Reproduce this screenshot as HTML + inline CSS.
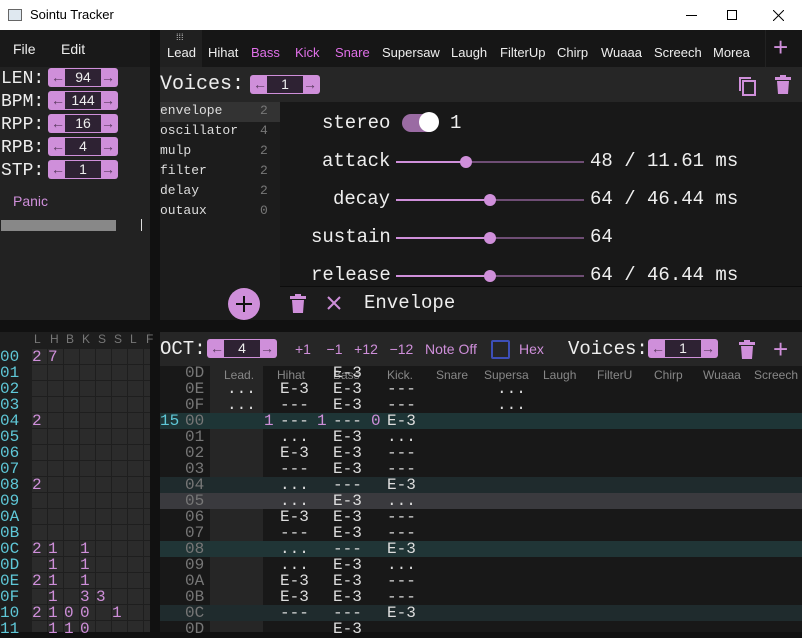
<!DOCTYPE html>
<html><head><meta charset="utf-8"><style>
*{margin:0;padding:0;box-sizing:border-box}
body{width:802px;height:632px;overflow:hidden;background:#111;font-family:"Liberation Sans",sans-serif;position:relative}
.a{position:absolute;white-space:pre}
.m{font-family:"Liberation Mono",monospace}
.pk{color:#cf8fda}
.w{color:#eee}
.g{color:#777}
.num{background:#cf8fda;border-radius:3px;height:19px}
.num i{position:absolute;left:17px;right:17px;bottom:1px;top:1px;background:#2e2233;color:#eee;font-style:normal;text-align:center;font-family:"Liberation Sans";font-size:14px;line-height:17px}
.num b{position:absolute;top:0;font-weight:normal;color:#5a3a60;font-size:14px;line-height:18px}
.pr{font-family:"Liberation Mono",monospace;font-size:16px;color:#ddd;line-height:16px}
.t{position:absolute;top:45px;font-size:13px;color:#eee}
.h{position:absolute;top:368px;font-size:12px;color:#888}
</style></head><body>
<!-- title bar -->
<div class="a" style="left:0;top:0;width:802px;height:30px;background:#fff"></div>
<div class="a" style="left:8px;top:9px;width:14px;height:12px;border:1px solid #666;background:#dfe8f0"></div>
<div class="a" style="left:30px;top:7px;font-size:13px;color:#000">Sointu Tracker</div>
<div class="a" style="left:686px;top:15px;width:11px;height:1px;background:#000"></div>
<div class="a" style="left:727px;top:10px;width:10px;height:10px;border:1px solid #000"></div>
<svg class="a" style="left:773px;top:10px" width="11" height="11"><path d="M0 0L11 11M11 0L0 11" stroke="#000" stroke-width="1"/></svg>

<!-- left panel -->
<div class="a" style="left:0;top:30px;width:150px;height:37px;background:#191919"></div>
<div class="a" style="left:0;top:67px;width:150px;height:253px;background:#222"></div>
<div class="a w" style="left:13px;top:41px;font-size:14px">File</div>
<div class="a w" style="left:61px;top:41px;font-size:14px">Edit</div>
<div class="a m w" style="left:1px;top:68px;font-size:18px;line-height:23px">LEN:<br>BPM:<br>RPP:<br>RPB:<br>STP:</div>
<div class="a num" style="left:48px;top:68px;width:70px"><b style="left:3px">←</b><i>94</i><b style="right:3px">→</b></div>
<div class="a num" style="left:48px;top:91px;width:70px"><b style="left:3px">←</b><i>144</i><b style="right:3px">→</b></div>
<div class="a num" style="left:48px;top:114px;width:70px"><b style="left:3px">←</b><i>16</i><b style="right:3px">→</b></div>
<div class="a num" style="left:48px;top:137px;width:70px"><b style="left:3px">←</b><i>4</i><b style="right:3px">→</b></div>
<div class="a num" style="left:48px;top:160px;width:70px"><b style="left:3px">←</b><i>1</i><b style="right:3px">→</b></div>
<div class="a pk" style="left:13px;top:193px;font-size:14px">Panic</div>
<div class="a" style="left:1px;top:220px;width:115px;height:11px;background:#888"></div>
<div class="a" style="left:141px;top:219px;width:1px;height:12px;background:#ddd"></div>

<!-- tabs -->
<div class="a" style="left:160px;top:30px;width:642px;height:37px;background:#161616"></div>
<div class="a" style="left:160px;top:30px;width:42px;height:37px;background:#202020"></div>
<div class="a" style="left:176px;top:32px;font-size:9px;color:#ccc">⁞⁞⁞</div>
<div class="t" style="left:167px">Lead</div>
<div class="t pk" style="left:208px">Hihat</div>
<div class="t" style="left:251px;color:#e070e8">Bass</div>
<div class="t" style="left:295px;color:#e070e8">Kick</div>
<div class="t" style="left:335px;color:#e070e8">Snare</div>
<div class="t" style="left:382px">Supersaw</div>
<div class="t" style="left:451px">Laugh</div>
<div class="t" style="left:500px">FilterUp</div>
<div class="t" style="left:557px">Chirp</div>
<div class="t" style="left:601px">Wuaaa</div>
<div class="t" style="left:654px">Screech</div>
<div class="t" style="left:713px">Morea</div>
<div class="a" style="left:765px;top:30px;width:37px;height:37px;background:#161616;border-left:1px solid #222"></div>
<div class="a pk" style="left:773px;top:33px;font-size:26px;line-height:28px">+</div>

<!-- voices row -->
<div class="a" style="left:160px;top:67px;width:642px;height:35px;background:#262626"></div>
<div class="a w" style="left:160px;top:73px;font-size:20px;font-family:'Liberation Mono',monospace">Voices:</div>
<div class="a num" style="left:250px;top:75px;width:70px"><b style="left:3px">←</b><i>1</i><b style="right:3px">→</b></div>
<svg class="a" style="left:736px;top:74px" width="22" height="22"><path d="M3 3v14h2V5h10V3z" fill="#cf8fda"/><rect x="7" y="7" width="12" height="14" fill="none" stroke="#cf8fda" stroke-width="2"/></svg>
<svg class="a" style="left:774px;top:75px" width="18" height="20"><rect x="1" y="2" width="16" height="3" fill="#cf8fda"/><rect x="6" y="0" width="6" height="3" fill="#cf8fda"/><path d="M3 6h12l-1 13H4z" fill="#cf8fda"/></svg>

<!-- unit list -->
<div class="a" style="left:160px;top:102px;width:120px;height:218px;background:#1c1c1c"></div>
<div class="a" style="left:160px;top:102px;width:120px;height:20px;background:#333"></div>
<div class="a m" style="left:160px;top:101px;font-size:13px;line-height:20px;color:#ddd">envelope<br>oscillator<br>mulp<br>filter<br>delay<br>outaux</div>
<div class="a m g" style="left:260px;top:101px;font-size:13px;line-height:20px">2<br>4<br>2<br>2<br>2<br>0</div>

<!-- params -->
<div class="a" style="left:280px;top:102px;width:522px;height:186px;background:#181818"></div>
<div class="a m w" style="left:322px;top:112px;font-size:19px">stereo</div>
<div class="a" style="left:402px;top:114px;width:36px;height:18px;border-radius:9px;background:#9a6ba3"></div>
<div class="a" style="left:419px;top:112px;width:20px;height:20px;border-radius:10px;background:#fff"></div>
<div class="a m w" style="left:450px;top:112px;font-size:19px">1</div>
<div class="a m w" style="left:322px;top:150px;font-size:19px">attack</div>
<div class="a m w" style="left:333px;top:188px;font-size:19px">decay</div>
<div class="a m w" style="left:311px;top:226px;font-size:19px">sustain</div>
<div class="a m w" style="left:311px;top:264px;font-size:19px">release</div>
<div class="a" style="left:396px;top:161px;width:70px;height:2px;background:#cf8fda"></div><div class="a" style="left:466px;top:161px;width:118px;height:2px;background:#6e4d74"></div><div class="a" style="left:460px;top:156px;width:12px;height:12px;border-radius:6px;background:#cf8fda"></div>
<div class="a" style="left:396px;top:199px;width:94px;height:2px;background:#cf8fda"></div><div class="a" style="left:490px;top:199px;width:94px;height:2px;background:#6e4d74"></div><div class="a" style="left:484px;top:194px;width:12px;height:12px;border-radius:6px;background:#cf8fda"></div>
<div class="a" style="left:396px;top:237px;width:94px;height:2px;background:#cf8fda"></div><div class="a" style="left:490px;top:237px;width:94px;height:2px;background:#6e4d74"></div><div class="a" style="left:484px;top:232px;width:12px;height:12px;border-radius:6px;background:#cf8fda"></div>
<div class="a" style="left:396px;top:275px;width:94px;height:2px;background:#cf8fda"></div><div class="a" style="left:490px;top:275px;width:94px;height:2px;background:#6e4d74"></div><div class="a" style="left:484px;top:270px;width:12px;height:12px;border-radius:6px;background:#cf8fda"></div>
<div class="a m w" style="left:590px;top:150px;font-size:19px">48 / 11.61 ms</div>
<div class="a m w" style="left:590px;top:188px;font-size:19px">64 / 46.44 ms</div>
<div class="a m w" style="left:590px;top:226px;font-size:19px">64</div>
<div class="a m w" style="left:590px;top:264px;font-size:19px">64 / 46.44 ms</div>
<div class="a" style="left:280px;top:286px;width:522px;height:34px;background:#1c1c1c;border-top:1px solid #0c0c0c"></div>
<div class="a" style="left:228px;top:288px;width:32px;height:32px;border-radius:16px;background:#cf8fda"></div>
<div class="a" style="left:236px;top:303px;width:16px;height:2px;background:#111"></div><div class="a" style="left:243px;top:296px;width:2px;height:16px;background:#111"></div>
<svg class="a" style="left:290px;top:294px" width="16" height="19"><rect x="0" y="2" width="16" height="3" fill="#cf8fda"/><rect x="5" y="0" width="6" height="3" fill="#cf8fda"/><path d="M2 6h12l-1 13H3z" fill="#cf8fda"/></svg>
<svg class="a" style="left:326px;top:295px" width="16" height="16"><path d="M2 2L14 14M14 2L2 14" stroke="#cf8fda" stroke-width="2"/></svg>
<div class="a m w" style="left:364px;top:292px;font-size:19px">Envelope</div>

<!-- order list -->
<div class="a" style="left:0;top:332px;width:150px;height:300px;background:#1e1e1e"></div>
<div class="a" style="left:34px;top:332px;font-size:12px;color:#777">L</div>
<div class="a" style="left:50px;top:332px;font-size:12px;color:#777">H</div>
<div class="a" style="left:66px;top:332px;font-size:12px;color:#777">B</div>
<div class="a" style="left:82px;top:332px;font-size:12px;color:#777">K</div>
<div class="a" style="left:98px;top:332px;font-size:12px;color:#777">S</div>
<div class="a" style="left:114px;top:332px;font-size:12px;color:#777">S</div>
<div class="a" style="left:130px;top:332px;font-size:12px;color:#777">L</div>
<div class="a" style="left:146px;top:332px;font-size:12px;color:#777">F</div>
<div class="a m" style="left:0;top:349px;font-size:16px;line-height:16px;color:#5fc8d8">00<br>01<br>02<br>03<br>04<br>05<br>06<br>07<br>08<br>09<br>0A<br>0B<br>0C<br>0D<br>0E<br>0F<br>10<br>11</div>
<svg class="a" style="left:32px;top:349px" width="118" height="283">
<defs><pattern id="p" width="16" height="16" patternUnits="userSpaceOnUse"><rect width="15" height="15" fill="#2b2b2b"/></pattern></defs>
<rect width="118" height="283" fill="url(#p)"/></svg>
<div class="a m pk" style="left:32px;top:349px;font-size:16px;line-height:16px;letter-spacing:6.4px">27<br><br><br><br>2<br><br><br><br>2<br><br><br><br>21 1<br> 1 1<br>21 1<br> 1 33<br>2100 1<br> 110</div>

<!-- pattern -->
<div class="a" style="left:160px;top:332px;width:642px;height:300px;background:#181818"></div>
<div class="a" style="left:160px;top:332px;width:642px;height:34px;background:#262626"></div>
<div class="a w m" style="left:160px;top:338px;font-size:19px">OCT:</div>
<div class="a num" style="left:207px;top:339px;width:70px"><b style="left:3px">←</b><i>4</i><b style="right:3px">→</b></div>
<div class="a pk" style="left:295px;top:341px;font-size:14px">+1    −1   +12   −12   Note Off</div>
<div class="a" style="left:491px;top:340px;width:19px;height:19px;border:2px solid #3d4fb8;border-radius:2px"></div>
<div class="a pk" style="left:519px;top:341px;font-size:14px">Hex</div>
<div class="a w" style="left:568px;top:338px;font-size:19px;font-family:'Liberation Mono',monospace">Voices:</div>
<div class="a num" style="left:648px;top:339px;width:70px"><b style="left:3px">←</b><i>1</i><b style="right:3px">→</b></div>
<svg class="a" style="left:739px;top:340px" width="16" height="19"><rect x="0" y="2" width="16" height="3" fill="#cf8fda"/><rect x="5" y="0" width="6" height="3" fill="#cf8fda"/><path d="M2 6h12l-1 13H3z" fill="#cf8fda"/></svg>
<div class="a pk" style="left:773px;top:334px;font-size:26px">+</div>

<div class="a" style="left:210px;top:366px;width:53px;height:266px;background:#262626"></div>
<div class="a" style="left:160px;top:413px;width:642px;height:16px;background:#1e3536"></div>
<div class="a" style="left:160px;top:477px;width:642px;height:16px;background:#1f2b2d"></div>
<div class="a" style="left:160px;top:493px;width:642px;height:16px;background:#3a3a3e"></div>
<div class="a" style="left:160px;top:541px;width:642px;height:16px;background:#203536"></div>
<div class="a" style="left:160px;top:605px;width:642px;height:16px;background:#1f2b2d"></div>
<div class="h" style="left:224px">Lead.</div>
<div class="h" style="left:277px">Hihat</div>
<div class="h" style="left:333px">Bass</div>
<div class="h" style="left:387px">Kick.</div>
<div class="h" style="left:436px">Snare</div>
<div class="h" style="left:484px">Supersa</div>
<div class="h" style="left:543px">Laugh</div>
<div class="h" style="left:597px">FilterU</div>
<div class="h" style="left:654px">Chirp</div>
<div class="h" style="left:703px">Wuaaa</div>
<div class="h" style="left:754px">Screech</div>
<div class="a pr" style="left:185px;top:365px;color:#777">0D<br>0E<br>0F<br>00<br>01<br>02<br>03<br>04<br>05<br>06<br>07<br>08<br>09<br>0A<br>0B<br>0C<br>0D</div>
<div class="a pr" style="left:160px;top:413px;color:#5fc8d8">15</div>
<div class="a pr" style="left:227px;top:365px"><br>...<br>...</div>
<div class="a pr" style="left:497px;top:365px"><br>...<br>...</div>
<div class="a pr" style="left:264px;top:413px;color:#cf8fda">1</div>
<div class="a pr" style="left:317px;top:413px;color:#cf8fda">1</div>
<div class="a pr" style="left:371px;top:413px;color:#cf8fda">0</div>
<div class="a pr" style="left:280px;top:365px"><br>E-3<br>---<br>---<br>...<br>E-3<br>---<br>...<br>...<br>E-3<br>---<br>...<br>...<br>E-3<br>E-3<br>---</div>
<div class="a pr" style="left:333px;top:365px">E-3<br>E-3<br>E-3<br>---<br>E-3<br>E-3<br>E-3<br>---<br>E-3<br>E-3<br>E-3<br>---<br>E-3<br>E-3<br>E-3<br>---<br>E-3</div>
<div class="a pr" style="left:387px;top:365px"><br>---<br>---<br>E-3<br>...<br>---<br>---<br>E-3<br>...<br>---<br>---<br>E-3<br>...<br>---<br>---<br>E-3</div>
</body></html>
